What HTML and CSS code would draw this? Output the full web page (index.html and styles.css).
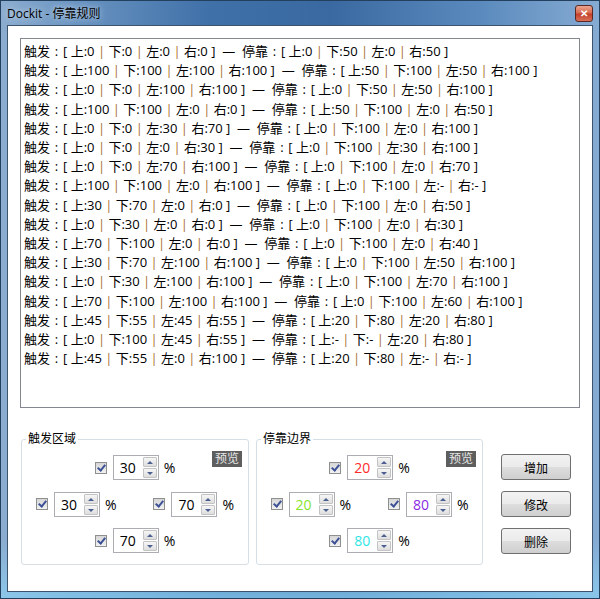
FILE: index.html
```html
<!DOCTYPE html>
<html lang="zh">
<head>
    <meta charset="UTF-8">
    <title>Dockit - 停靠规则</title>
    <link rel="stylesheet" href="styles.css">
</head>
<body>
    <div class="window">
        <div class="titlebar">
            <span class="title">Dockit - 停靠规则</span>
            <span class="close">✕</span>
        </div>
        <div class="client">
            <div class="rule-list" id="ruleList"></div>

            <div class="controls">
                <div class="group">
                    <span class="group-title">触发区域</span>
                    <span class="preview">预览</span>
                    <div class="field">
                        <span class="check"></span>
                        <div class="spin"><span class="val">30</span><span class="arrows"><i class="up"></i><i class="down"></i></span></div>
                        <span class="pct">%</span>
                    </div>
                    <div class="pair">
                        <div class="field">
                            <span class="check"></span>
                            <div class="spin"><span class="val">30</span><span class="arrows"><i class="up"></i><i class="down"></i></span></div>
                            <span class="pct">%</span>
                        </div>
                        <div class="field">
                            <span class="check"></span>
                            <div class="spin"><span class="val">70</span><span class="arrows"><i class="up"></i><i class="down"></i></span></div>
                            <span class="pct">%</span>
                        </div>
                    </div>
                    <div class="field">
                        <span class="check"></span>
                        <div class="spin"><span class="val">70</span><span class="arrows"><i class="up"></i><i class="down"></i></span></div>
                        <span class="pct">%</span>
                    </div>
                </div>

                <div class="group group-dock">
                    <span class="group-title">停靠边界</span>
                    <span class="preview">预览</span>
                    <div class="field">
                        <span class="check"></span>
                        <div class="spin"><span class="val red">20</span><span class="arrows"><i class="up"></i><i class="down"></i></span></div>
                        <span class="pct">%</span>
                    </div>
                    <div class="pair">
                        <div class="field">
                            <span class="check"></span>
                            <div class="spin"><span class="val green">20</span><span class="arrows"><i class="up"></i><i class="down"></i></span></div>
                            <span class="pct">%</span>
                        </div>
                        <div class="field">
                            <span class="check"></span>
                            <div class="spin"><span class="val purple">80</span><span class="arrows"><i class="up"></i><i class="down"></i></span></div>
                            <span class="pct">%</span>
                        </div>
                    </div>
                    <div class="field">
                        <span class="check"></span>
                        <div class="spin"><span class="val cyan">80</span><span class="arrows"><i class="up"></i><i class="down"></i></span></div>
                        <span class="pct">%</span>
                    </div>
                </div>

                <div class="actions">
                    <button class="btn">增加</button>
                    <button class="btn">修改</button>
                    <button class="btn">删除</button>
                </div>
            </div>
        </div>
    </div>

    <script>
        // [trigger top, bottom, left, right], [dock top, bottom, left, right]
        const rules = [
            [[0, 0, 0, 0], [0, 50, 0, 50]],
            [[100, 100, 100, 100], [50, 100, 50, 100]],
            [[0, 0, 100, 100], [0, 50, 50, 100]],
            [[100, 100, 0, 0], [50, 100, 0, 50]],
            [[0, 0, 30, 70], [0, 100, 0, 100]],
            [[0, 0, 0, 30], [0, 100, 30, 100]],
            [[0, 0, 70, 100], [0, 100, 0, 70]],
            [[100, 100, 0, 100], [0, 100, '-', '-']],
            [[30, 70, 0, 0], [0, 100, 0, 50]],
            [[0, 30, 0, 0], [0, 100, 0, 30]],
            [[70, 100, 0, 0], [0, 100, 0, 40]],
            [[30, 70, 100, 100], [0, 100, 50, 100]],
            [[0, 30, 100, 100], [0, 100, 70, 100]],
            [[70, 100, 100, 100], [0, 100, 60, 100]],
            [[45, 55, 45, 55], [20, 80, 20, 80]],
            [[0, 100, 45, 55], ['-', '-', 20, 80]],
            [[45, 55, 0, 100], [20, 80, '-', '-']]
        ];

        const sides = ['上', '下', '左', '右'];

        function box(vals) {
            const parts = vals.map((v, i) => sides[i] + ':' + v);
            return '[ ' + parts.join(' <i class="sep">|</i> ') + ' ]';
        }

        const list = document.getElementById('ruleList');
        rules.forEach(r => {
            const line = document.createElement('div');
            line.className = 'rule';
            line.innerHTML = '触发<span class="colon">:</span>' + box(r[0]) + '  —  停靠<span class="colon">:</span>' + box(r[1]);
            list.appendChild(line);
        });
    </script>
</body>
</html>
```

FILE: styles.css
```css
* {
    margin: 0;
    padding: 0;
    box-sizing: border-box;
}

body {
    width: 600px;
    height: 599px;
    overflow: hidden;
    font-family: "Open Sans", "Noto Sans CJK SC", sans-serif;
    color: #000;
}

.window {
    width: 600px;
    height: 599px;
    display: flex;
    flex-direction: column;
    padding: 0 6px 6px;
    border: 1px solid #24405f;
    background:
        linear-gradient(180deg, rgba(255, 255, 255, 0) 90%, rgba(140, 210, 245, 0.7) 100%),
        linear-gradient(90deg, #8cadd0 0%, #6b95c2 12%, #3f70a8 35%, #3a69a1 55%, #5a8abd 80%, #86abd3 100%);
}

.titlebar {
    height: 24px;
    display: flex;
    align-items: center;
    justify-content: space-between;
}

.title {
    font-size: 12px;
    color: #000;
    text-shadow: 0 0 6px rgba(255, 255, 255, 0.8);
}

.close {
    width: 18px;
    height: 17px;
    border: 1px solid #5a2a22;
    border-radius: 3px;
    background: linear-gradient(180deg, #eaa591 0%, #d96a50 45%, #c3402a 55%, #d8705a 100%);
    color: #fff;
    font-size: 10px;
    font-weight: bold;
    line-height: 15px;
    text-align: center;
}

.client {
    flex: 1;
    display: flex;
    flex-direction: column;
    padding: 12px 12px 0;
    background: #fff;
    border: 1px solid #3e546d;
}

.rule-list {
    height: 370px;
    padding: 3px 3px;
    border: 1px solid #828790;
    font-size: 13px;
    line-height: 19.2px;
}

.rule {
    white-space: pre;
}

.colon {
    display: inline-block;
    width: 13px;
    text-align: center;
}

.sep {
    font-style: normal;
    color: #a8702f;
}

.controls {
    display: flex;
    margin-top: 31px;
    margin-left: 1px;
}

.group {
    position: relative;
    width: 228px;
    height: 126px;
    padding-top: 15px;
    display: flex;
    flex-direction: column;
    align-items: center;
    gap: 11.5px;
    border: 1px solid #d5dfe5;
    border-radius: 3px;
}

.group-dock {
    width: 227px;
    margin-left: 7px;
}

.group-title {
    position: absolute;
    top: -9px;
    left: 4px;
    padding: 0 2px;
    background: #fff;
    font-size: 12px;
    line-height: 16px;
}

.preview {
    position: absolute;
    top: 11px;
    right: 6px;
    width: 30px;
    height: 16px;
    background: #5e5e5e;
    color: #e6e6e6;
    font-size: 12px;
    line-height: 16px;
    text-align: center;
}

.pair {
    width: 198px;
    display: flex;
    justify-content: space-between;
}

.field {
    display: flex;
    align-items: center;
    height: 25px;
}

.check {
    position: relative;
    width: 12px;
    height: 12px;
    margin-right: 6px;
    border: 1px solid #8e8f8f;
    background: linear-gradient(180deg, #d6d6d6, #f2f2f2);
}

.check::after {
    content: "";
    position: absolute;
    left: 3px;
    top: 0;
    width: 3px;
    height: 6px;
    border: solid #3d5196;
    border-width: 0 2px 2px 0;
    transform: rotate(40deg);
}

.spin {
    display: flex;
    width: 46px;
    height: 25px;
    border: 1px solid #abadb3;
    background: #fff;
}

.val {
    flex: 1;
    padding-left: 6px;
    font-size: 14px;
    line-height: 23px;
}

.red { color: #ff2a2a; }
.green { color: #86e62a; }
.purple { color: #8a2be2; }
.cyan { color: #2ee6e6; }

.arrows {
    width: 15px;
    display: flex;
    flex-direction: column;
    gap: 1px;
    padding: 1px 1px 1px 0;
}

.arrows i {
    position: relative;
    flex: 1;
    border: 1px solid #c3c3c3;
    border-radius: 1px;
    background: linear-gradient(180deg, #f6f6f6, #dedede);
}

.arrows i::after {
    content: "";
    position: absolute;
    left: 3px;
    top: 3px;
    border-left: 3px solid transparent;
    border-right: 3px solid transparent;
}

.arrows .up::after {
    border-bottom: 3px solid #4b5f8e;
}

.arrows .down::after {
    border-top: 3px solid #4b5f8e;
}

.pct {
    margin-left: 5px;
    font-size: 14px;
}

.actions {
    display: flex;
    flex-direction: column;
    gap: 11px;
    margin-left: 18px;
    padding-top: 15px;
}

.btn {
    width: 70px;
    height: 26px;
    border: 1px solid #707070;
    border-radius: 3px;
    background: linear-gradient(180deg, #f2f2f2 0%, #ebebeb 48%, #dddddd 52%, #cfcfcf 100%);
    font-family: "Noto Sans CJK SC", sans-serif;
    font-size: 12px;
    color: #000;
}
```
